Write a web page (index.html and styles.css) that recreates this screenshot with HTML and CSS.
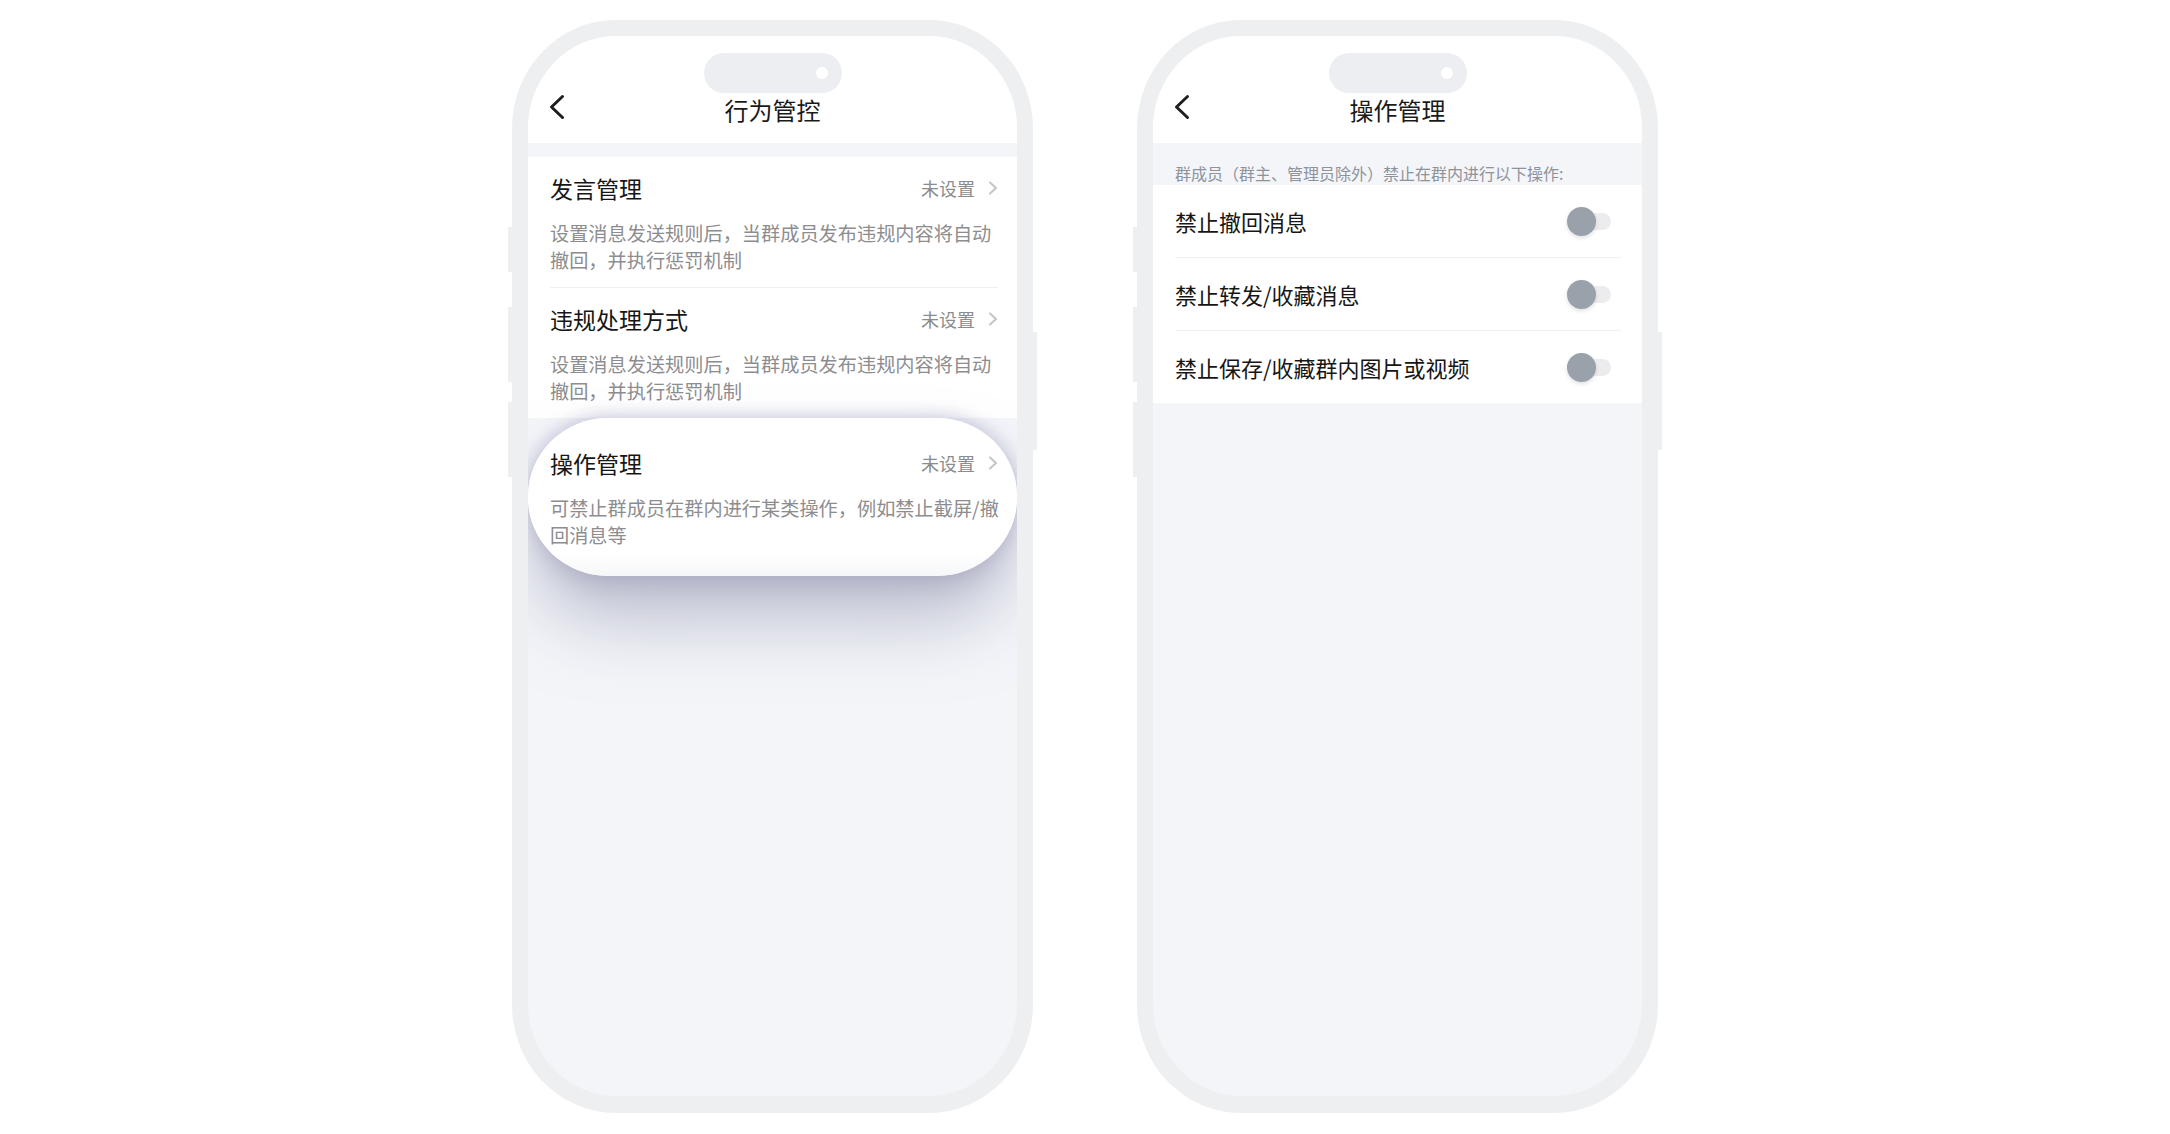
FILE: index.html
```html
<!DOCTYPE html>
<html lang="zh-CN">
<head>
<meta charset="utf-8">
<title>行为管控 / 操作管理</title>
<link rel="stylesheet" href="styles.css">
</head>
<body>
<main class="stage">
  <div class="phone">
    <span class="side side-l1"></span>
    <span class="side side-l2"></span>
    <span class="side side-l3"></span>
    <span class="side side-r1"></span>
    <div class="screen">
      <div class="island"><span class="cam"></span></div>
      <header class="nav">
        <svg class="back" width="16" height="26" viewBox="0 0 16 26"><polyline points="13.5,2.5 2.5,13 13.5,23.5" fill="none" stroke="#1f1f1f" stroke-width="3" stroke-linecap="round" stroke-linejoin="round"/></svg>
        <h1 class="nav-title">行为管控</h1>
        <span></span>
      </header>
      <section class="group">
        <div class="item">
          <div class="item-head">
            <span class="item-title">发言管理</span>
            <span class="item-status">未设置</span>
            <svg class="arrow" width="10" height="14" viewBox="0 0 10 14"><polyline points="2,1.5 8,7 2,12.5" fill="none" stroke="#c4c4c6" stroke-width="2" stroke-linecap="round" stroke-linejoin="round"/></svg>
          </div>
          <p class="item-desc">设置消息发送规则后，当群成员发布违规内容将自动撤回，并执行惩罚机制</p>
        </div>
        <div class="item">
          <div class="item-head">
            <span class="item-title">违规处理方式</span>
            <span class="item-status">未设置</span>
            <svg class="arrow" width="10" height="14" viewBox="0 0 10 14"><polyline points="2,1.5 8,7 2,12.5" fill="none" stroke="#c4c4c6" stroke-width="2" stroke-linecap="round" stroke-linejoin="round"/></svg>
          </div>
          <p class="item-desc">设置消息发送规则后，当群成员发布违规内容将自动撤回，并执行惩罚机制</p>
        </div>
      </section>
      <section class="group group-hl">
        <div class="item">
          <div class="item-head">
            <span class="item-title">操作管理</span>
            <span class="item-status">未设置</span>
            <svg class="arrow" width="10" height="14" viewBox="0 0 10 14"><polyline points="2,1.5 8,7 2,12.5" fill="none" stroke="#c4c4c6" stroke-width="2" stroke-linecap="round" stroke-linejoin="round"/></svg>
          </div>
          <p class="item-desc">可禁止群成员在群内进行某类操作，例如禁止截屏/撤回消息等</p>
        </div>
      </section>
    </div>
  </div>

  <div class="phone">
    <span class="side side-l1"></span>
    <span class="side side-l2"></span>
    <span class="side side-l3"></span>
    <span class="side side-r1"></span>
    <div class="screen">
      <div class="island"><span class="cam"></span></div>
      <header class="nav">
        <svg class="back" width="16" height="26" viewBox="0 0 16 26"><polyline points="13.5,2.5 2.5,13 13.5,23.5" fill="none" stroke="#1f1f1f" stroke-width="3" stroke-linecap="round" stroke-linejoin="round"/></svg>
        <h1 class="nav-title">操作管理</h1>
        <span></span>
      </header>
      <p class="hint">群成员（群主、管理员除外）禁止在群内进行以下操作:</p>
      <section class="list">
        <div class="row">
          <span class="row-label">禁止撤回消息</span>
          <span class="switch"><span class="knob"></span></span>
        </div>
        <div class="row">
          <span class="row-label">禁止转发/收藏消息</span>
          <span class="switch"><span class="knob"></span></span>
        </div>
        <div class="row">
          <span class="row-label">禁止保存/收藏群内图片或视频</span>
          <span class="switch"><span class="knob"></span></span>
        </div>
      </section>
    </div>
  </div>
</main>
</body>
</html>
```

FILE: styles.css
```css
* { box-sizing: border-box; }

html, body {
  margin: 0;
  padding: 0;
  background: #ffffff;
}

body {
  width: 2170px;
  height: 1134px;
  overflow: hidden;
  font-family: "Noto Sans CJK SC", "Noto Sans", sans-serif;
  color: #1c1c1c;
}

.stage {
  display: flex;
  justify-content: center;
  gap: 104px;
  padding-top: 20px;
}

.phone {
  position: relative;
  width: 521px;
  height: 1093px;
  padding: 16px 16px 17px;
  background: #eeeff1;
  border-radius: 104px / 108px;
}

.side {
  position: absolute;
  width: 4px;
  background: #eeeff1;
}
.side-l1 { left: -4px; top: 207px; height: 45px; }
.side-l2 { left: -4px; top: 287px; height: 75px; }
.side-l3 { left: -4px; top: 382px; height: 75px; }
.side-r1 { right: -4px; top: 312px; height: 118px; }

.screen {
  position: relative;
  isolation: isolate;
  height: 100%;
  overflow: hidden;
  background: #f3f5f9;
  border-radius: 88px / 92px;
}

.island {
  position: absolute;
  top: 17px;
  left: 50%;
  width: 138px;
  height: 40px;
  margin-left: -69px;
  border-radius: 20px;
  background: #eceef1;
  z-index: 2;
}
.cam {
  position: absolute;
  right: 14px;
  top: 14px;
  width: 12px;
  height: 12px;
  border-radius: 50%;
  background: #ffffff;
}

.nav {
  height: 107px;
  padding-top: 40px;
  background: #ffffff;
  display: grid;
  grid-template-columns: 1fr auto 1fr;
  align-items: center;
}
.back {
  display: block;
  margin-left: 21px;
  margin-bottom: 5px;
}
.nav-title {
  margin: 0;
  font-size: 24px;
  font-weight: 400;
  line-height: 34px;
  color: #1a1a1a;
}

/* left screen */
.group {
  margin-top: 14px;
  background: #ffffff;
}

.item {
  position: relative;
  margin-left: 22px;
  margin-right: 19px;
  padding: 17px 0 13px;
  border-bottom: 1px solid #f0f0f2;
}
.item:last-child { border-bottom: none; }

.item-head {
  display: flex;
  align-items: center;
  height: 28px;
}
.item-title {
  flex: 1;
  font-size: 23px;
  line-height: 28px;
  font-weight: 400;
  color: #161616;
}
.item-status {
  font-size: 18px;
  line-height: 28px;
  color: #8c8c8c;
}
.arrow {
  display: block;
  margin-left: 13px;
}
.item-desc {
  margin: 18px -5px 0 0;
  font-size: 19.2px;
  line-height: 27px;
  color: #8d8d8f;
}

.group-hl {
  position: relative;
  background: transparent;
}
.group-hl::before {
  content: "";
  position: absolute;
  left: 0;
  right: 0;
  top: -14px;
  bottom: -14px;
  border-radius: 80px / 78px;
  background: linear-gradient(to bottom, #ffffff 0, #ffffff 86%, #f6f7f9 100%);
  box-shadow: 0 48px 72px -6px rgba(140, 142, 170, 0.55), 0 10px 22px rgba(150, 150, 180, 0.3), 0 -4px 16px rgba(150, 150, 190, 0.35);
  z-index: 0;
}
.group-hl .item {
  z-index: 1;
}

/* right screen */
.hint {
  margin: 0;
  padding: 19px 22px 0;
  height: 42px;
  font-size: 16px;
  line-height: 23px;
  color: #8e939b;
  white-space: nowrap;
}

.list {
  background: #ffffff;
}
.row {
  display: flex;
  align-items: center;
  height: 73px;
  margin: 0 21px 0 22px;
  border-bottom: 1px solid #f0f0f2;
}
.row:last-child {
  height: 72px;
  border-bottom: none;
}
.row-label {
  flex: 1;
  font-size: 22px;
  line-height: 28px;
  color: #161616;
}
.switch {
  display: flex;
  align-items: center;
  width: 40px;
  height: 17px;
  margin-right: 10px;
  border-radius: 9px;
  background: #ececee;
}
.knob {
  flex: none;
  width: 29px;
  height: 29px;
  margin-left: -4px;
  border-radius: 50%;
  background: #99a1ab;
  box-shadow: 0 2px 4px rgba(0, 0, 0, 0.12);
}
```
